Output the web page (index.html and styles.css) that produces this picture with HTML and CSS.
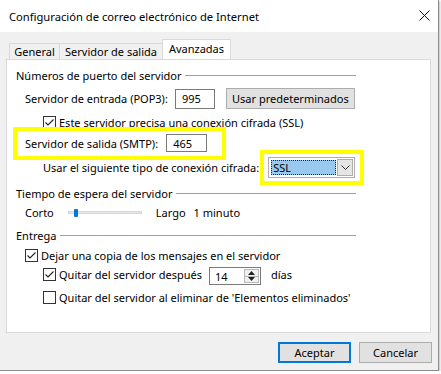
FILE: index.html
```html
<!DOCTYPE html>
<html>

<head>
    <link rel="stylesheet" href="styles.css">
</head>

<body>

    <div class="window">
        <div class="titlebar">
            <span class="title">Configuración de correo electrónico de Internet</span>
            <svg class="close" width="11" height="11" viewBox="0 0 11 11">
                <path d="M0.5 0.5 L10.5 10.5 M10.5 0.5 L0.5 10.5" stroke="#111" stroke-width="1" fill="none" />
            </svg>
        </div>

        <div class="client">
            <div class="tabs">
                <div class="tab tab-general">General</div>
                <div class="tab tab-server">Servidor de salida</div>
                <div class="tab tab-adv active">Avanzadas</div>
            </div>

            <div class="panel">
                <div class="group-head gh-ports"><span>Números de puerto del servidor</span></div>

                <div class="row row-pop">
                    <span class="lbl">Servidor de entrada (POP3):</span>
                    <div class="textbox tb-pop">995</div>
                    <button class="btn btn-defaults">Usar predeterminados</button>
                </div>

                <div class="row row-ssl">
                    <span class="check on"></span>
                    <span>Este servidor precisa una conexión cifrada (SSL)</span>
                </div>

                <div class="row row-smtp">
                    <span class="lbl">Servidor de salida (SMTP):</span>
                    <div class="textbox tb-smtp">465</div>
                </div>

                <div class="row row-crypt">
                    <span class="lbl">Usar el siguiente tipo de conexión cifrada:</span>
                    <div class="combo">
                        <div class="combo-value"><span>SSL</span></div>
                        <div class="combo-btn">
                            <svg width="9" height="5" viewBox="0 0 9 5">
                                <path d="M0.5 0.5 L4.5 4.5 L8.5 0.5" stroke="#333" fill="none" />
                            </svg>
                        </div>
                    </div>
                </div>

                <div class="group-head gh-time"><span>Tiempo de espera del servidor</span></div>

                <div class="row row-timeout">
                    <span class="lbl-short">Corto</span>
                    <div class="slider"><span class="thumb"></span></div>
                    <span class="lbl-long">Largo</span>
                    <span>1 minuto</span>
                </div>

                <div class="group-head gh-delivery"><span>Entrega</span></div>

                <div class="row row-copy">
                    <span class="check on"></span>
                    <span>Dejar una copia de los mensajes en el servidor</span>
                </div>

                <div class="row row-after">
                    <span class="check on"></span>
                    <span class="lbl">Quitar del servidor después</span>
                    <div class="spin">
                        <span class="spin-val">14</span>
                        <div class="spin-btns">
                            <span class="spin-up"></span>
                            <span class="spin-down"></span>
                        </div>
                    </div>
                    <span class="days">días</span>
                </div>

                <div class="row row-deleted">
                    <span class="check"></span>
                    <span>Quitar del servidor al eliminar de 'Elementos eliminados'</span>
                </div>

                <div class="mark mark-smtp"></div>
                <div class="mark mark-crypt"></div>
            </div>

            <div class="actions">
                <button class="btn btn-ok">Aceptar</button>
                <button class="btn btn-cancel">Cancelar</button>
            </div>
        </div>
    </div>

</body>

</html>
```

FILE: styles.css
```css
body {
    margin: 0;
    background-color: #ffffff;
    font-family: "Noto Sans", "Open Sans", sans-serif;
    font-size: 11px;
    color: #000000;
}

.window {
    width: 438px;
    height: 370px;
    background-color: #f0f0f0;
    border-right: 1px solid #8c8c8c;
    border-bottom: 1px solid #8c8c8c;
    box-shadow: 1px 1px 2px rgba(0, 0, 0, 0.25);
}

.titlebar {
    height: 32px;
    background-color: #ffffff;
    display: flex;
    align-items: center;
    padding: 0 8px 0 9px;
}

.title {
    font-size: 11.2px;
    flex-grow: 1;
}

.close {
    margin-top: -1px;
}

.client {
    padding: 0 7px 0 6px;
}

/* tabs */

.tabs {
    display: flex;
    align-items: flex-end;
    height: 20px;
    margin-top: 7px;
    padding-left: 3px;
}

.tab {
    height: 16px;
    box-sizing: border-box;
    border: 1px solid #d9d9d9;
    border-bottom: none;
    display: flex;
    align-items: center;
    justify-content: center;
    background-color: #f0f0f0;
}

.tab-general {
    width: 51px;
}

.tab-server {
    width: 104px;
    margin-left: -1px;
}

.tab-adv {
    width: 69px;
    margin-left: -1px;
}

.tab.active {
    height: 21px;
    margin-bottom: -1px;
    background-color: #ffffff;
    padding-bottom: 3px;
    position: relative;
}

/* panel */

.panel {
    height: 274px;
    box-sizing: border-box;
    background-color: #ffffff;
    border: 1px solid #d9d9d9;
    position: relative;
    padding-left: 9px;
}

.group-head {
    width: 340px;
    height: 18px;
    display: flex;
    align-items: center;
}

.group-head::after {
    content: "";
    flex-grow: 1;
    height: 1px;
    background-color: #a0a0a0;
    margin-left: 4px;
}

.gh-ports {
    margin-top: 6px;
}

.gh-time {
    margin-top: 6px;
}

.gh-delivery {
    margin-top: 5px;
}

.row {
    display: flex;
    align-items: center;
}

.row-pop {
    height: 21px;
    margin-top: 4px;
    padding-left: 9px;
}

.row-ssl {
    height: 18px;
    margin-top: 4px;
    padding-left: 27px;
}

.row-smtp {
    height: 20px;
    margin-top: 2px;
    padding-left: 9px;
}

.row-crypt {
    height: 22px;
    margin-top: 3px;
    padding-left: 27px;
}

.row-timeout {
    height: 18px;
    margin-top: 1px;
    padding-left: 9px;
}

.row-copy {
    height: 20px;
    margin-top: 1px;
    padding-left: 9px;
}

.row-after {
    height: 19px;
    padding-left: 27px;
}

.row-deleted {
    height: 18px;
    margin-top: 4px;
    padding-left: 27px;
}

/* inputs */

.textbox {
    box-sizing: border-box;
    border: 1px solid #7a7a7a;
    background-color: #ffffff;
    display: flex;
    align-items: center;
    padding-left: 6px;
}

.tb-pop {
    width: 40px;
    height: 20px;
    margin-left: 7px;
}

.tb-smtp {
    width: 41px;
    height: 18px;
    margin-left: 8px;
}

.btn {
    box-sizing: border-box;
    height: 21px;
    border: 1px solid #adadad;
    background-color: #e1e1e1;
    font-family: inherit;
    font-size: 11px;
    color: #000000;
    padding: 0;
}

.btn-defaults {
    width: 129px;
    margin-left: 11px;
}

.check {
    width: 13px;
    height: 13px;
    box-sizing: border-box;
    border: 1px solid #333333;
    background-color: #ffffff;
    margin-right: 3px;
    flex-shrink: 0;
    background-repeat: no-repeat;
    background-position: center;
}

.check.on {
    background-image: url("data:image/svg+xml,%3Csvg xmlns='http://www.w3.org/2000/svg' width='11' height='11' viewBox='0 0 11 11'%3E%3Cpath d='M1.5 5.5 L4 8 L9.5 2.5' stroke='%23222' stroke-width='1.1' fill='none'/%3E%3C/svg%3E");
}

.combo {
    width: 87px;
    height: 21px;
    box-sizing: border-box;
    border: 1px solid #adadad;
    background-color: #ffffff;
    display: flex;
    padding: 2px;
    margin-left: 9px;
}

.combo-value {
    flex-grow: 1;
    background-color: #99c9ef;
    border: 1px dotted #222222;
    display: flex;
    align-items: center;
    padding-left: 1px;
}

.combo-btn {
    width: 16px;
    box-sizing: border-box;
    border: 1px solid #adadad;
    background-color: #e5e5e5;
    display: flex;
    align-items: center;
    justify-content: center;
    margin: -1px -1px -1px 1px;
}

.slider {
    width: 74px;
    height: 3px;
    background-color: #e7e7e7;
    border: 1px solid #d6d6d6;
    box-sizing: border-box;
    margin-left: 14px;
    position: relative;
}

.thumb {
    position: absolute;
    left: 5px;
    top: -3px;
    width: 4px;
    height: 8px;
    border-radius: 1px;
    background-color: #0078d7;
}

.lbl-long {
    margin-left: 14px;
    margin-right: 8px;
}

.spin {
    width: 52px;
    height: 18px;
    box-sizing: border-box;
    border: 1px solid #7a7a7a;
    background-color: #ffffff;
    display: flex;
    margin-left: 7px;
    margin-top: 3px;
}

.spin-val {
    flex-grow: 1;
    padding-left: 5px;
    display: flex;
    align-items: center;
    padding-top: 1px;
}

.spin-btns {
    width: 15px;
    display: flex;
    flex-direction: column;
    padding: 1px;
}

.spin-up,
.spin-down {
    flex-grow: 1;
    border: 1px solid #b8b8b8;
    background-color: #f0f0f0;
    background-repeat: no-repeat;
    background-position: center;
}

.spin-up {
    background-image: url("data:image/svg+xml,%3Csvg xmlns='http://www.w3.org/2000/svg' width='7' height='4'%3E%3Cpath d='M0 4 L3.5 0 L7 4 Z' fill='%23222'/%3E%3C/svg%3E");
}

.spin-down {
    border-top: none;
    background-image: url("data:image/svg+xml,%3Csvg xmlns='http://www.w3.org/2000/svg' width='7' height='4'%3E%3Cpath d='M0 0 L3.5 4 L7 0 Z' fill='%23222'/%3E%3C/svg%3E");
}

.days {
    margin-left: 10px;
    margin-top: -1px;
}

/* highlight boxes drawn over the dialog */

.mark {
    position: absolute;
    box-sizing: border-box;
    border: 4px solid #ffff00;
}

.mark-smtp {
    left: 6px;
    top: 67px;
    width: 213px;
    height: 33px;
}

.mark-crypt {
    left: 253px;
    top: 90px;
    width: 104px;
    height: 35px;
}

/* buttons */

.actions {
    display: flex;
    justify-content: flex-end;
    gap: 8px;
    margin-top: 9px;
    margin-right: -1px;
}

.btn-ok,
.btn-cancel {
    width: 73px;
}

.btn-ok {
    border: 2px solid #0078d7;
}
```
